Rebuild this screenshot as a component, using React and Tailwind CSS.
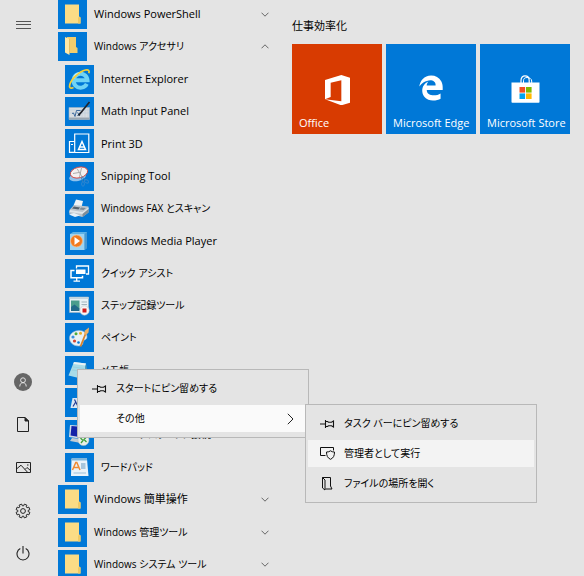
import { FaEdgeLegacy } from "react-icons/fa6";

/* ---------- small line icons ---------- */

function Chevron({ up }) {
  return (
    <svg width="8" height="5" viewBox="0 0 8 5" fill="none" stroke="#666" strokeWidth="1">
      <path d={up ? "M.5 4.3 4 .8l3.500 3.500" : "M.5.7 4 4.200 7.500.7"} />
    </svg>
  );
}

function PinIcon() {
  return (
    <svg width="15" height="10" viewBox="0 0 15 10" fill="none" stroke="#111" strokeWidth="1.1">
      <path d="M0 5h5M5.500 1v8M5.500 2.500h2l1 .7h3l2-1.200v6l-2-1.200h-3l-1 .7h-2" />
    </svg>
  );
}

function AdminIcon() {
  return (
    <svg width="15" height="13" viewBox="0 0 15 13" fill="none" stroke="#111" strokeWidth="1">
      <path d="M5.500 8.500h-5v-8h13V3.500" />
      <path d="M10.500 3.800c1 .9 2.300 1.200 4 1.200 0 3.600-1 6-4 7.300-3-1.300-4-3.700-4-7.300 1.700 0 3-.3 4-1.200Z" />
    </svg>
  );
}

function FileLocationIcon() {
  return (
    <svg width="15" height="15" viewBox="0 0 15 15" fill="none" stroke="#111" strokeWidth="1">
      <path d="M2.500 1.500h8v8.500l1.500 3h-6.500" />
      <path d="M2.500 1.500l2.500 2.500v10l-2.500-2Z" />
    </svg>
  );
}

// eight-toothed gear outline
const gearPath = (() => {
  const pts = [];
  for (let i = 0; i < 8; i++) {
    const mid = (i * Math.PI) / 4 + Math.PI / 8;
    [
      [-0.27, 5.2],
      [-0.2, 7],
      [0.2, 7],
      [0.27, 5.2],
    ].forEach(([d, r]) => {
      pts.push(`${(8 + r * Math.cos(mid + d)).toFixed(2)} ${(8 + r * Math.sin(mid + d)).toFixed(2)}`);
    });
  }
  return `M${pts.join("L")}Z`;
})();

const railButtons = [
  {
    label: "ユーザー",
    icon: (
      <svg width="18" height="18" viewBox="0 0 18 18" fill="none" stroke="#e4e4e4">
        <circle cx="9" cy="9" r="9" fill="#666" stroke="none" />
        <circle cx="9" cy="7.200" r="2.400" />
        <path d="M5.800 13.500c0-2.400 1.200-3.800 3.200-3.800s3.200 1.400 3.200 3.800" />
      </svg>
    ),
  },
  {
    label: "ドキュメント",
    icon: (
      <svg width="12" height="15" viewBox="0 0 12 15" fill="none" stroke="#222">
        <path d="M.5.5h7.500l3.500 3.500v10.500H.5Z" />
        <path d="M8 .5V4h3.500Z" fill="#222" />
      </svg>
    ),
  },
  {
    label: "ピクチャ",
    icon: (
      <svg width="15" height="11" viewBox="0 0 15 11" fill="none" stroke="#222">
        <path d="M.5.500h14v10H.5ZM.5 7 5 3.200l6.500 7M9 7.500l2-2 3.500 3" />
        <path d="M11 3h1.500" />
      </svg>
    ),
  },
  {
    label: "設定",
    icon: (
      <svg width="16" height="16" viewBox="0 0 16 16" fill="none" stroke="#222" strokeLinejoin="round">
        <path d={gearPath} />
        <circle cx="8" cy="8" r="2.400" />
      </svg>
    ),
  },
  {
    label: "電源",
    icon: (
      <svg width="14" height="15" viewBox="0 0 14 15" fill="none" stroke="#222" strokeWidth="1.1">
        <path d="M7 0v7.500M4.300 2.600a6 6 0 1 0 5.400 0" />
      </svg>
    ),
  },
];

/* ---------- app icons, all on a 29px tile ---------- */

function AppIcon({ children }) {
  return (
    <svg className="size-[29px] shrink-0 bg-[#0078d7]" viewBox="0 0 29 29" fill="none">
      {children}
    </svg>
  );
}

const icons = {
  folder: (
    <>
      <path d="M7 4.500h14v12l1.500 1v6H7Z" fill="#fbdc85" />
      <path d="M20 18l1-1.500 1.500 1v6H20Z" fill="#efc964" />
    </>
  ),
  folderOpen: (
    <>
      <path d="M9 5h9v10l1.500 1v5H9Z" fill="#f3cd6c" />
      <path d="M7 5l4.500 2v16L7 20.500Z" fill="#ffe9a6" />
      <path d="M11.500 7v14" stroke="#d8ad49" strokeWidth=".6" />
    </>
  ),
  ie: (
    <>
      <path d="M21.800 18.800a7 7 0 1 1 .7-3.600H10" stroke="#6fd3f5" strokeWidth="4" />
      <path d="M8.500 14a6.500 6.500 0 0 1 6.500-6" stroke="#c9f2ff" strokeWidth="1.500" />
      <path
        d="M8.500 22.500c-3 1.500-4.700.5-3.700-3C6.300 14.500 14 6.500 20.500 5c3.300-.7 4.200.8 3.300 3.300"
        stroke="#f7cf35"
        strokeWidth="1.700"
      />
    </>
  ),
  math: (
    <>
      <path d="M4 10.500h20.500v12H4Z" fill="#d9dde1" stroke="#9fb4c4" strokeWidth=".6" />
      <path d="M4 20.500h20.500v2H4Z" fill="#9aa7b2" />
      <path d="M5 13h19M5 16h19M17 11v9M20 11v9M23 11v9" stroke="#b7c9d8" strokeWidth=".5" />
      <path d="M7 16.500l1.500-.5 1.500 3.500 1.500-6h4M12.500 15.500l2.500 3.500M15 15.500l-2.500 3.500" stroke="#1b4f8d" strokeWidth=".8" />
      <path d="M24.500 5l-8.500 10.500-2.500 3" stroke="#20242b" strokeWidth="1.700" />
    </>
  ),
  print3d: (
    <g stroke="#fff" strokeWidth="1.200">
      <path d="M9.500 23.300h-5V12.500h5" />
      <path d="M9.700 23.500V5h14.100v18.500Z" />
      <path d="M13.500 20.500l3.500-8 3.500 8Z" strokeWidth="1.500" />
      <path d="M15 18h4" strokeWidth="1.500" />
      <path d="M6 15.500h2" strokeWidth="1" />
    </g>
  ),
  snip: (
    <>
      <ellipse cx="12.500" cy="15" rx="8.500" ry="4" fill="#8fc2ec" transform="rotate(-12 12.500 15)" />
      <ellipse cx="14" cy="10.500" rx="8.800" ry="5.300" fill="#f4f0f0" stroke="#d2443d" strokeWidth=".9" transform="rotate(-14 14 10.500)" />
      <path d="M12 6.500l5.500 9M16.500 6l-2 9M8 11.500l6-1" stroke="#999" strokeWidth=".8" />
      <path d="M17 14.500l3.500 4M16.500 15.500l1 4.500" stroke="#3b7fb8" strokeWidth="1" />
      <ellipse cx="21.500" cy="19.300" rx="2.300" ry="1.500" stroke="#2f86d0" strokeWidth="1" transform="rotate(30 21.500 19.300)" />
      <ellipse cx="18" cy="22" rx="1.400" ry="2.200" stroke="#2f86d0" strokeWidth="1" />
    </>
  ),
  fax: (
    <>
      <path d="M11 5.500l7 1.500-1.500 6-8-1.500Z" fill="#eef3f6" />
      <path d="M4.500 16l4.500-5 14.500 1.500v6l-6 4.500L4 19.500Z" fill="#bcc5cc" />
      <path d="M5 16l12.500 2 6-4.500v1.500l-6 5L4.500 18Z" fill="#e0e5e9" />
      <path d="M9 12.500l6 1-1.500 2-6.500-1Z" fill="#56636e" />
      <path d="M16 13.500l5 .5-2.500 2-4-.5Z" fill="#7d8b96" />
      <path d="M4 20.500l5-1.500 6 2.500-5 1.500Z" fill="#e7f1f8" />
      <path d="M17.500 20l6-5v3.500l-6 4.500Z" fill="#7f8d98" />
    </>
  ),
  media: (
    <>
      <path d="M5 8l3-2h14v16l-2.500 2H5Z" fill="#5fb2e6" />
      <path d="M5 8h14.500v16H5Z" fill="#9bd3f3" />
      <path d="M19.500 8L22 6v16l-2.500 2Z" fill="#4698d3" />
      <circle cx="11.500" cy="15" r="6" fill="#f27a1e" stroke="#fbc08b" strokeWidth=".7" />
      <path d="M9.500 11l5.500 4-5.500 4Z" fill="#fff" />
    </>
  ),
  assist: (
    <>
      <path d="M11.500 9.500V7h12v8H21" stroke="#fff" strokeWidth="1.300" />
      <path d="M11 10.500h9.500v4.500H11Z" fill="#fff" />
      <path d="M9.500 11.500H6v7.200h11.500v-2" stroke="#fff" strokeWidth="1.500" />
      <path d="M11.700 19v3M8.500 22.200h6.500" stroke="#fff" strokeWidth="1.300" />
    </>
  ),
  steps: (
    <>
      <path d="M4.500 6h19v15.500h-19Z" fill="#e9f1f5" stroke="#9db3c0" strokeWidth=".6" />
      <path d="M4.500 6h19v2h-19Z" fill="#c6d6df" />
      <path d="M6 9.500h8.500v10.500H6Z" fill="#4a9d8c" />
      <path d="M6 16l3.500-2.500 5 4V20H6Z" fill="#226a88" />
      <path d="M16.500 11h5.500M16.500 13.500h5.500" stroke="#a2b4be" />
      <circle cx="19.500" cy="19.500" r="4.700" fill="#f6f6f6" stroke="#b9c2c8" strokeWidth=".6" />
      <path d="M17.500 17.500h4v4h-4Z" fill="#d01c1c" />
    </>
  ),
  paint: (
    <>
      <path
        d="M4.500 15C4.500 10.500 9.500 7.500 14 7.500c5 0 8 3 8 6.500 0 2.500-2.500 2.500-3.500 4-1 2 0 5-5 5-5 0-9-3.500-9-8Z"
        fill="#e8f0f5"
        stroke="#9eb9cb"
        strokeWidth=".6"
      />
      <circle cx="8" cy="14" r="1.600" fill="#3b8fe0" />
      <circle cx="11" cy="10.800" r="1.500" fill="#4cab3c" />
      <circle cx="9.500" cy="18" r="1.600" fill="#d64532" />
      <circle cx="15.500" cy="10.300" r="1.500" fill="#e9ac27" />
      <circle cx="13.500" cy="19.500" r="1.300" fill="#0078d7" />
      <path d="M15.500 23.500l5-12.500" stroke="#d9822b" strokeWidth="1.800" />
      <path d="M19 10.500l1-3 4-3-.5 5-2.500 2.500Z" fill="#f0b062" />
    </>
  ),
  notepad: (
    <>
      <path d="M9 6l12 1.500-3 15.500L3.500 19.500Z" fill="#a8dbe8" />
      <path d="M9 6l12 1.500-.5 2L8.300 8Z" fill="#e8f2f4" />
      <path d="M21 7.500l2 14-5 1.500Z" fill="#5b9fb0" />
      <path d="M8 11l11 1.500M7 14l11 1.500" stroke="#8ecbdb" strokeWidth=".6" />
    </>
  ),
  character: (
    <>
      <path d="M7.500 10h14l-2 10h-14Z" fill="#dbe7f5" />
      <path d="M8 18.500l3-5M9.500 11.500l3.500 7" stroke="#233b93" strokeWidth="1.200" />
    </>
  ),
  remote: (
    <>
      <path d="M5 5l15 1-2 13-14-2Z" fill="#cfdbe6" />
      <path d="M6.500 6l12 1-1.500 10.500-11.500-2Z" fill="#1422a8" />
      <path d="M7 18l9 1v4l-11-2Z" fill="#c3ccd4" />
      <circle cx="18.500" cy="20" r="5.500" fill="#e9efe9" stroke="#b4beb6" strokeWidth=".5" />
      <path d="M15.500 18l2.500 2.500-2 2.500M21.500 17l-2.500 2.500 2.500 2.500" stroke="#3fa03b" strokeWidth="1.300" />
    </>
  ),
  wordpad: (
    <>
      <path d="M6.500 6h15.500l1.500 17H6Z" fill="#eaf3fa" />
      <path d="M6.500 5h15.500v2.500H6.500Z" fill="#7fb6dc" />
      <path d="M7.500 17l3.300-7.500h1L15 17M9 14.500h5" stroke="#ee8a33" strokeWidth="1.500" />
      <path d="M16 11h4.500M16 13h4.500M16 15h4.500" stroke="#6798bd" />
      <path d="M8.500 20h12.500" stroke="#9dbfd8" />
    </>
  ),
};

const apps = [
  { name: "Windows PowerShell", icon: "folder", folder: true },
  { name: "Windows アクセサリ", icon: "folderOpen", folder: true, open: true },
  { name: "Internet Explorer", icon: "ie" },
  { name: "Math Input Panel", icon: "math" },
  { name: "Print 3D", icon: "print3d" },
  { name: "Snipping Tool", icon: "snip" },
  { name: "Windows FAX とスキャン", icon: "fax" },
  { name: "Windows Media Player", icon: "media" },
  { name: "クイック アシスト", icon: "assist" },
  { name: "ステップ記録ツール", icon: "steps" },
  { name: "ペイント", icon: "paint" },
  { name: "メモ帳", icon: "notepad" },
  { name: "文字コード表", icon: "character" },
  { name: "リモート デスクトップ接続", icon: "remote" },
  { name: "ワードパッド", icon: "wordpad" },
  { name: "Windows 簡単操作", icon: "folder", folder: true },
  { name: "Windows 管理ツール", icon: "folder", folder: true },
  { name: "Windows システム ツール", icon: "folder", folder: true },
];

const labelSize = (text) => (/[ぁ-ヶ]/.test(text) ? "text-[10px]" : "text-[11px]");

/* ---------- tiles ---------- */

const tiles = [
  {
    name: "Office",
    color: "bg-[#d83b01]",
    logo: (
      <svg width="25" height="30" viewBox="0 0 75 90" fill="#fff">
        <path d="M0 15 49 0l26 8v75l-26 8L0 73l49 6V16L17 23v43L0 73Z" />
      </svg>
    ),
  },
  {
    name: "Microsoft Edge",
    color: "bg-[#0078d7]",
    logo: <FaEdgeLegacy size={26} color="#fff" />,
  },
  {
    name: "Microsoft Store",
    color: "bg-[#0078d7]",
    logo: (
      <svg width="29" height="28" viewBox="0 0 29 28" fill="none">
        <path d="M10 8V5.500C10 2.500 11.800.8 14 .8s4.200 1.700 4.200 4.700V8" stroke="#fff" strokeWidth="1.200" />
        <path d="M12.500 8V5.800c0-2 1.200-3.300 3.500-3.300s4.700 1.300 4.700 3.500v2" stroke="#fff" strokeWidth="1" />
        <path d="M.5 7.500h28V27q0 .8-.8.8H1.300q-.8 0-.8-.8Z" fill="#fff" />
        <path d="M8.500 12h5.600v5.600H8.500Z" fill="#f25022" />
        <path d="M15 12h5.600v5.600H15Z" fill="#7fba00" />
        <path d="M8.500 18.400h5.600V24H8.500Z" fill="#00a4ef" />
        <path d="M15 18.400h5.600V24H15Z" fill="#ffb900" />
      </svg>
    ),
  },
];

function MenuItem({ icon, label, className = "", children }) {
  return (
    <button
      role="menuitem"
      className={`flex h-[27px] w-full items-center text-left text-[10px] whitespace-nowrap ${className}`}
    >
      <span className="flex w-9 shrink-0 items-center pl-3">{icon}</span>
      <span>{label}</span>
      {children}
    </button>
  );
}

export default function App() {
  return (
    <div className="relative flex h-screen overflow-hidden bg-[#e4e4e4] font-['Open_Sans','Noto_Sans_CJK_JP',sans-serif] text-black [font-feature-settings:'palt']">
      {/* Rail */}
      <nav className="flex w-[46px] shrink-0 flex-col justify-between pb-px">
        <button aria-label="メニュー" className="flex h-[49px] items-center justify-center">
          <svg width="15" height="8" viewBox="0 0 15 8" stroke="#555">
            <path d="M0 .5h15M0 3.500h15M0 7.500h15" />
          </svg>
        </button>
        <div className="flex flex-col">
          {railButtons.map((b) => (
            <button key={b.label} aria-label={b.label} className="flex h-[43px] items-center justify-center">
              {b.icon}
            </button>
          ))}
        </div>
      </nav>

      {/* App list, runs slightly past the bottom of the window */}
      <ul className="ml-3 flex min-h-[calc(100vh+3px)] w-[211px] shrink-0 flex-col justify-between self-start">
        {apps.map((app) => (
          <li key={app.name} className={app.folder ? "" : "pl-[7px]"}>
            <button
              className={`flex h-[29px] w-full items-center gap-[7px] text-left whitespace-nowrap ${labelSize(app.name)}`}
            >
              <AppIcon>{icons[app.icon]}</AppIcon>
              <span className="flex-1">{app.name}</span>
              {app.folder && <Chevron up={app.open} />}
            </button>
          </li>
        ))}
      </ul>

      {/* Tiles */}
      <section className="ml-[23px] flex-1 pt-[18px]">
        <h2 className="text-[11px] leading-4">仕事効率化</h2>
        <div className="mt-[10px] flex gap-1">
          {tiles.map((t) => (
            <a
              key={t.name}
              href="#"
              className={`flex size-[90px] shrink-0 flex-col items-center justify-between pt-[31px] pb-[3px] text-[11px] text-white ${t.color}`}
            >
              {t.logo}
              <span className="w-full pl-[7px] leading-4 whitespace-nowrap">{t.name}</span>
            </a>
          ))}
        </div>
      </section>

      {/* Context menu and its submenu */}
      <div
        role="menu"
        className="absolute top-[369px] left-[77px] flex w-[232px] flex-col gap-[3px] border border-[#b8b8b8] bg-[#e4e4e4] px-0.5 py-[5px]"
      >
        <MenuItem icon={<PinIcon />} label="スタートにピン留めする" />
        <MenuItem label="その他" className="bg-[#fafafa]">
          <svg className="mr-3 ml-auto" width="7" height="12" viewBox="0 0 7 12" fill="none" stroke="#222">
            <path d="M.8.8 6 6 .8 11.200" />
          </svg>
        </MenuItem>
      </div>
      <div
        role="menu"
        className="absolute top-[404px] left-[305px] flex w-[232px] flex-col gap-[3px] border border-[#b8b8b8] bg-[#e4e4e4] px-0.5 py-[5px]"
      >
        <MenuItem icon={<PinIcon />} label="タスク バーにピン留めする" />
        <MenuItem icon={<AdminIcon />} label="管理者として実行" className="bg-[#f3f3f3]" />
        <MenuItem icon={<FileLocationIcon />} label="ファイルの場所を開く" />
      </div>
    </div>
  );
}
